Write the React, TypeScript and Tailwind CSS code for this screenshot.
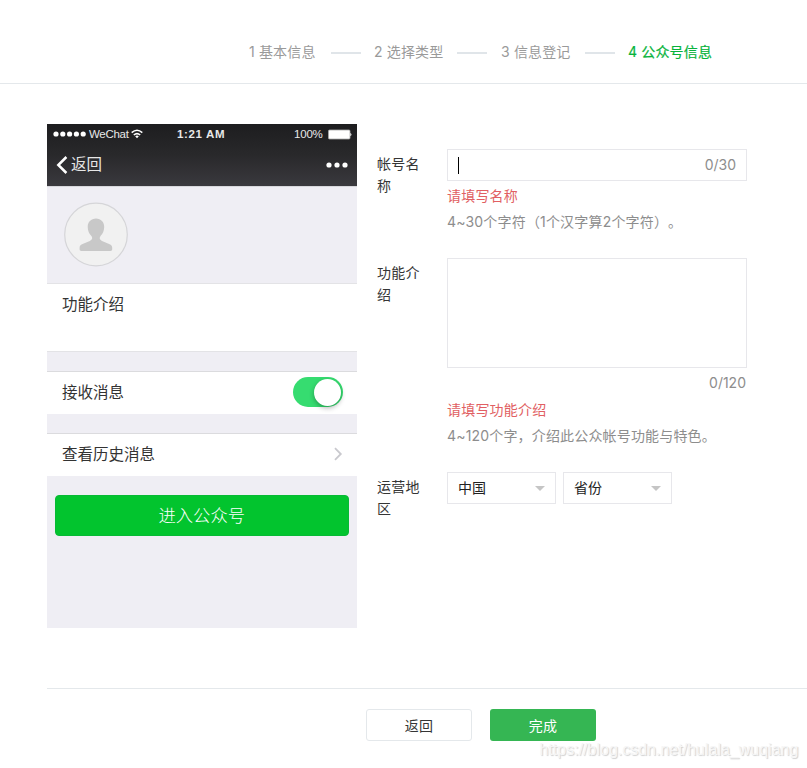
import React from 'react';
import clsx from 'clsx';

const steps = [
  { label: '1 基本信息', width: 'w-[68px]', gap: 'mr-[13px] ml-[14px]' },
  { label: '2 选择类型', width: 'w-[69px]', gap: 'mx-[14px]' },
  { label: '3 信息登记', width: 'w-[70px]', gap: 'mr-[13px] ml-[14px]' },
  { label: '4 公众号信息', width: 'w-[86px]', active: true },
];

const StepBar: React.FC = () => (
  <header className="flex h-[84px] items-center border-b border-[#e4e8eb] pt-[21px] pl-[249px] tracking-[0.15px]">
    {steps.map(step => (
      <React.Fragment key={step.label}>
        <span
          className={clsx(
            'shrink-0 whitespace-nowrap',
            step.width,
            step.active ? 'text-[#07b33b] [-webkit-text-stroke:0.2px]' : 'text-[#9a9a9a]'
          )}
        >
          {step.label}
        </span>
        {!step.active && <i className={clsx('mt-px h-[2px] w-[30px] shrink-0 bg-[#e0e5e9]', step.gap)} />}
      </React.Fragment>
    ))}
  </header>
);

const StatusBar: React.FC = () => (
  <div className="flex h-5 items-center font-['Liberation_Sans','Noto_Sans_CJK_SC',sans-serif] text-[11.5px] leading-5 tracking-normal text-[#e8e8e8]">
    <div className="flex w-[130px] items-center pl-[6px]">
      <svg width="34" height="8" viewBox="0 0 34 8" fill="#fff">
        {[3, 9.8, 16.6, 23.4, 30.2].map(cx => (
          <circle key={cx} cx={cx} cy="4" r="2.6" />
        ))}
      </svg>
      <span className="ml-[2px] tracking-[-0.3px]">WeChat</span>
      <svg className="ml-[2px]" width="12" height="10" viewBox="0 0 12 10" fill="none" stroke="#fff" strokeWidth="1.6">
        <path d="M.7 3.7Q6-1.2 11.3 3.7" />
        <path d="M2.8 6Q6 3.2 9.2 6" />
        <path d="M4.2 7.2Q6 5.8 7.8 7.2L6 9.2z" fill="#fff" stroke="none" />
      </svg>
    </div>
    <span className="w-[117px] font-bold tracking-[0.65px]">1:21 AM</span>
    <span className="w-[34px] tracking-[-0.2px]">100%</span>
    <svg width="25" height="11" viewBox="0 0 25 11">
      <rect x=".5" y="1" width="21.5" height="9" rx="1" fill="#fff" stroke="#aaa" strokeWidth=".8" />
      <path d="M22.3 3.7q2.4 1.8 0 3.6z" fill="#fff" />
    </svg>
  </div>
);

const PhonePreview: React.FC = () => (
  <div className="h-[504px] w-[310px] shrink-0 bg-[#efeef4] text-[15.5px] tracking-normal text-[#333]">
    <div className="h-[62px] bg-linear-to-b from-[#1d1d1f] via-[#29292b] to-[#3a393e]">
      <StatusBar />
      <div className="flex h-[42px] items-center pl-[9px] text-[#e6e6e6]">
        <svg width="12" height="18" viewBox="0 0 12 18" fill="none" stroke="#fff" strokeWidth="2.5">
          <path d="M10.4 1L2.3 9l8.1 8" />
        </svg>
        <span className="ml-[3px] text-[15.5px]">返回</span>
        <svg className="ml-auto mr-[8px]" width="23" height="6" viewBox="0 0 23 6" fill="#fff">
          <circle cx="3" cy="3" r="2.6" />
          <circle cx="11" cy="3" r="2.6" />
          <circle cx="19" cy="3" r="2.6" />
        </svg>
      </div>
    </div>
    <div className="h-[97px] border-t border-[#d8d8dc] pt-[15px] pl-[16px]">
      <svg width="66" height="66" viewBox="0 0 66 66">
        <circle cx="33" cy="32.5" r="31.3" fill="#f1f1f1" stroke="#d5d5d8" strokeWidth="1.2" />
        <path
          d="M33 16.5c-5 0-8.3 3.6-8.3 8.3 0 4 1.5 6.8 3.3 8.8 2 2.2 1.5 4-1.2 5.3l-7.2 3c-2.6 1.2-3 2-3 4.4v1c0 1.1.7 1.7 1.7 1.7h29.2c1 0 1.7-.6 1.7-1.7v-1c0-2.4-.5-3.2-3.1-4.4l-7.1-3c-2.6-1.2-3.1-3-1.1-5.3 1.8-2 3.3-4.8 3.3-8.8C41.2 20.1 38 16.5 33 16.5z"
          fill="#c8c8c8"
        />
      </svg>
    </div>
    <div className="h-[69px] border-y border-[#e3e3e6] bg-white pt-[10px] pl-[15px] leading-[22px]">功能介绍</div>
    <div className="mt-[19px] flex h-[43px] items-center border-t border-[#dbdbde] bg-white pr-[14px] pb-px pl-[15px]">
      <span>接收消息</span>
      <div className="mb-px ml-auto flex h-[30px] w-[50px] items-center justify-end rounded-full bg-[#36dc70] pr-[2px]">
        <i className="size-[27px] rounded-full bg-white shadow-[0_2px_5px_rgba(0,0,0,0.3)]" />
      </div>
    </div>
    <div className="mt-[19px] flex h-[43px] items-center border-t border-[#dbdbde] bg-white pb-px pl-[15px]">
      <span>查看历史消息</span>
      <svg className="mr-[14px] mb-px ml-auto" width="10" height="14" viewBox="0 0 10 14" fill="none" stroke="#c9c9ce" strokeWidth="1.8">
        <path d="M2 1.2L7.8 7 2 12.8" />
      </svg>
    </div>
    <div className="mr-[8px] ml-[7.5px] mt-[19px] flex h-[41px] items-center justify-center rounded-[4px] border border-[#07b935] bg-[#02c42e] text-[17.3px] font-light text-white">
      进入公众号
    </div>
  </div>
);

type FieldProps = { label: string; className?: string; children: React.ReactNode };

const Field: React.FC<FieldProps> = ({ label, className, children }) => (
  <div className={clsx('flex', className)}>
    <div className="mr-[20px] w-[50px] shrink-0 pt-[4px] leading-[22px] text-[#353535]">{label}</div>
    <div className="w-[300px]">{children}</div>
  </div>
);

const Select: React.FC<{ value: string }> = ({ value }) => (
  <div className="flex h-8 w-[109px] items-center border border-[#e7e7eb] bg-white pr-[10px] pl-[10px] tracking-normal text-[#222]">
    <span>{value}</span>
    <i className="ml-auto border-x-[5px] border-t-[5px] border-x-transparent border-t-[#c5c5c5]" />
  </div>
);

const AccountForm: React.FC = () => (
  <div className="ml-[20px] pt-[25px]">
    <Field label="帐号名称" className="h-[109px]">
      <div className="flex h-8 items-center border border-[#e7e7eb] pr-[10px] pl-[10px]">
        <i className="h-[17px] w-px bg-black" />
        <span className="ml-auto tracking-[-0.05px] text-[#8d8d8d]">0/30</span>
      </div>
      <p className="mt-[4px] leading-[22px] text-[#e15f63]">请填写名称</p>
      <p className="mt-[4px] leading-[22px] tracking-[0.18px] whitespace-nowrap text-[#8d8d8d] [text-spacing-trim:space-all]">
        4~30个字符（1个汉字算2个字符）。
      </p>
    </Field>
    <Field label="功能介绍" className="h-[214px]">
      <div className="h-[110px] border border-[#e7e7eb]" />
      <p className="mt-[4px] pr-[1px] text-right leading-[22px] tracking-normal text-[#8d8d8d]">0/120</p>
      <p className="mt-[5px] leading-[22px] text-[#e15f63]">请填写功能介绍</p>
      <p className="mt-[4px] leading-[22px] tracking-[0.17px] whitespace-nowrap text-[#8d8d8d]">
        4~120个字，介绍此公众帐号功能与特色。
      </p>
    </Field>
    <Field label="运营地区">
      <div className="flex gap-[7px]">
        <Select value="中国" />
        <Select value="省份" />
      </div>
    </Field>
  </div>
);

export default function App() {
  return (
    <div className="relative h-[768px] w-[807px] overflow-hidden bg-white font-['Inter','Noto_Sans_CJK_SC',sans-serif] text-[14px] leading-[22px] tracking-[0.2px]">
      <StepBar />
      <main className="flex h-[604px] pt-[40px] pl-[47px]">
        <PhonePreview />
        <AccountForm />
      </main>
      <footer className="ml-[47px] flex gap-[18px] border-t border-[#e4e8eb] pt-[20px] pl-[319px]">
        <button className="h-8 w-[106px] rounded-[3px] border border-[#e4e8eb] bg-white pt-px text-[#353535]">返回</button>
        <button className="h-8 w-[106px] rounded-[3px] bg-[#35b653] pt-px text-white">完成</button>
      </footer>
      <span className="absolute top-[739px] left-[539.5px] font-['Liberation_Sans',sans-serif] text-[16px] tracking-normal whitespace-nowrap text-[#f6f6f6] [text-shadow:1px_1px_1px_#d0d0d0]">
        https://blog.csdn.net/hulala_wuqiang
      </span>
    </div>
  );
}
